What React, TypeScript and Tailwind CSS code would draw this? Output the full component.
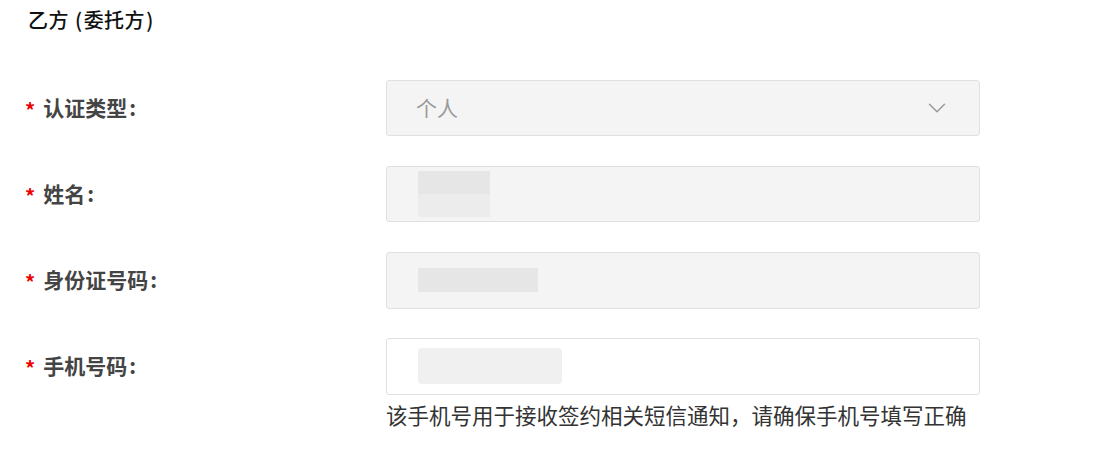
import { ChevronDown } from 'lucide-react';

const font = { fontFamily: '"Noto Sans CJK SC", "Noto Sans", sans-serif' };

function Blur({ w, h, two }: { w: number; h: number; two?: boolean }) {
  return (
    <div className="flex flex-col" style={{ width: w, height: h }}>
      <div className="flex-1 bg-[#e6e6e6]" />
      {two && <div className="flex-1 bg-[#ececec]" />}
    </div>
  );
}

function Row({ label, children }: { label: string; children: React.ReactNode }) {
  return (
    <div className="flex items-center h-[56px]">
      <div className="w-[386px] shrink-0 flex items-center pl-[25px] text-[21px] font-semibold text-[#444]">
        <span className="text-[#e00] mr-[8px] text-[20px] leading-none mt-[4px]">*</span>
        {label}
        <span className="ml-[2px]">:</span>
      </div>
      {children}
    </div>
  );
}

export default function App() {
  return (
    <div className="w-[1118px] h-[454px] bg-white text-[#333]" style={font}>
      <div className="pt-[6px] pl-[28px] text-[20px] font-medium text-[#111] leading-[28px] tracking-[0.5px]">
        乙方 <span className="mx-[1px]">(</span>委托方<span className="ml-[1px]">)</span>
      </div>
      <div className="mt-[46px] flex flex-col gap-[30px]">
        <Row label="认证类型">
          <div className="w-[594px] h-[56px] rounded-[3px] border border-[#e0e0e0] bg-[#f4f4f4] flex items-center justify-between pl-[29px] pr-[27px]">
            <span className="text-[21px] text-[#9a9a9a]">个人</span>
            <ChevronDown size={30} strokeWidth={1.2} className="text-[#999]" />
          </div>
        </Row>
        <Row label="姓名">
          <div className="w-[594px] h-[56px] rounded-[3px] border border-[#e0e0e0] bg-[#f4f4f4] flex items-center pl-[31px]">
            <Blur w={72} h={46} two />
          </div>
        </Row>
        <Row label="身份证号码">
          <div className="w-[594px] h-[57px] rounded-[3px] border border-[#e0e0e0] bg-[#f4f4f4] flex items-center pl-[31px]">
            <Blur w={120} h={24} />
          </div>
        </Row>
        <div className="flex flex-col">
          <Row label="手机号码">
            <div className="w-[594px] h-[57px] rounded-[3px] border border-[#e0e0e0] bg-white flex items-center pl-[31px]">
              <div className="w-[144px] h-[36px] bg-[#f0f0f0] rounded-[4px]" />
            </div>
          </Row>
          <div className="pl-[386px] mt-[7px] text-[21.5px] text-[#333] leading-[28px]">
            该手机号用于接收签约相关短信通知，请确保手机号填写正确
          </div>
        </div>
      </div>
    </div>
  );
}
